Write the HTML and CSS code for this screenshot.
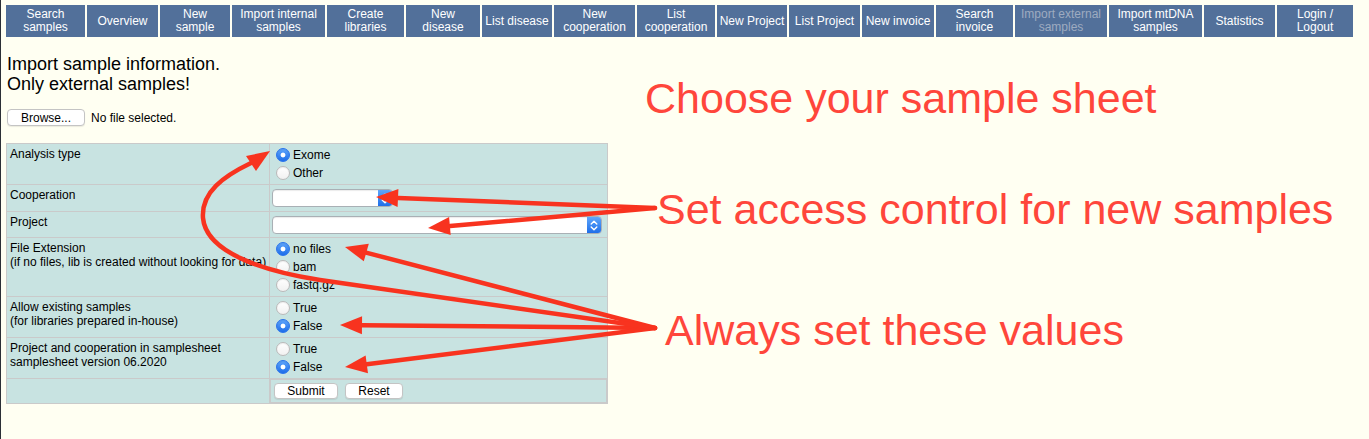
FILE: index.html
```html
<!DOCTYPE html>
<html lang="en">
<head>
<meta charset="utf-8">
<title>Import external samples</title>
<link rel="stylesheet" href="styles.css">
</head>
<body>
<nav class="topnav">
  <a class="nav-item">Search<br>samples</a>
  <a class="nav-item">Overview</a>
  <a class="nav-item">New<br>sample</a>
  <a class="nav-item">Import internal<br>samples</a>
  <a class="nav-item">Create<br>libraries</a>
  <a class="nav-item">New<br>disease</a>
  <a class="nav-item">List disease</a>
  <a class="nav-item">New<br>cooperation</a>
  <a class="nav-item">List<br>cooperation</a>
  <a class="nav-item">New Project</a>
  <a class="nav-item">List Project</a>
  <a class="nav-item">New invoice</a>
  <a class="nav-item">Search<br>invoice</a>
  <a class="nav-item disabled">Import external<br>samples</a>
  <a class="nav-item">Import mtDNA<br>samples</a>
  <a class="nav-item">Statistics</a>
  <a class="nav-item">Login /<br>Logout</a>
</nav>

<main class="content">
  <p class="intro">Import sample information.<br>Only external samples!</p>
  <div class="file-row">
    <span class="btn browse-btn">Browse...</span>
    <span class="file-name">No file selected.</span>
  </div>

  <form class="import-form">
    <table class="form-table">
      <colgroup><col class="col-label"><col class="col-value"></colgroup>
      <tr>
        <td class="lbl">Analysis type</td>
        <td class="val">
          <label class="opt"><input class="radio" type="radio" name="atype" checked>Exome</label>
          <label class="opt"><input class="radio" type="radio" name="atype">Other</label>
        </td>
      </tr>
      <tr>
        <td class="lbl">Cooperation</td>
        <td class="val val-select val-select-tall">
          <span class="select select-short"><span class="select-arrow"><svg width="14" height="17" viewBox="0 0 14 17"><path d="M4.2 7 L7 4.2 L9.8 7 M4.2 10 L7 12.8 L9.8 10" fill="none" stroke="#fff" stroke-width="1.4" stroke-linecap="round" stroke-linejoin="round"/></svg></span></span>
        </td>
      </tr>
      <tr>
        <td class="lbl">Project</td>
        <td class="val val-select">
          <span class="select select-long"><span class="select-arrow"><svg width="14" height="17" viewBox="0 0 14 17"><path d="M4.2 7 L7 4.2 L9.8 7 M4.2 10 L7 12.8 L9.8 10" fill="none" stroke="#fff" stroke-width="1.4" stroke-linecap="round" stroke-linejoin="round"/></svg></span></span>
        </td>
      </tr>
      <tr>
        <td class="lbl">File Extension<br>(if no files, lib is created without looking for data)</td>
        <td class="val">
          <label class="opt"><input class="radio" type="radio" name="ext" checked>no files</label>
          <label class="opt"><input class="radio" type="radio" name="ext">bam</label>
          <label class="opt"><input class="radio" type="radio" name="ext">fastq.gz</label>
        </td>
      </tr>
      <tr>
        <td class="lbl">Allow existing samples<br>(for libraries prepared in-house)</td>
        <td class="val">
          <label class="opt"><input class="radio" type="radio" name="allow">True</label>
          <label class="opt"><input class="radio" type="radio" name="allow" checked>False</label>
        </td>
      </tr>
      <tr>
        <td class="lbl">Project and cooperation in samplesheet<br>samplesheet version 06.2020</td>
        <td class="val">
          <label class="opt"><input class="radio" type="radio" name="pc">True</label>
          <label class="opt"><input class="radio" type="radio" name="pc" checked>False</label>
        </td>
      </tr>
      <tr>
        <td class="lbl"></td>
        <td class="val val-buttons">
          <span class="btn submit-btn">Submit</span>
          <span class="btn reset-btn">Reset</span>
        </td>
      </tr>
    </table>
  </form>
</main>

<div class="note note-choose">Choose your sample sheet</div>
<div class="note note-access">Set access control for new samples</div>
<div class="note note-always">Always set these values</div>

<svg class="arrows" width="1369" height="439" viewBox="0 0 1369 439">
  <g fill="none" stroke="#f8331f" stroke-width="4.5" stroke-linecap="round">
    <line x1="655" y1="208" x2="398" y2="198"/>
    <line x1="655" y1="208" x2="450" y2="226"/>
    <line x1="655" y1="328" x2="366" y2="252.6"/>
    <line x1="655" y1="328" x2="362" y2="325.2"/>
    <line x1="655" y1="328" x2="366.8" y2="364.3"/>
    <path d="M655 328 L320 280 C262 271 206 252 203 218 C201 192 224 176 251 163"/>
  </g>
  <g fill="#f8331f">
    <polygon points="376,197 398.4,188.9 397.6,206.9"/>
    <polygon points="428,228 449.1,217.1 450.7,235.0"/>
    <polygon points="345,247 368.8,243.8 363.8,261.3"/>
    <polygon points="340,325 362.1,316.2 361.9,334.2"/>
    <polygon points="345,367 365.6,355.4 368,373.2"/>
    <polygon points="270,151 246,156 256,171"/>
  </g>
</svg>
</body>
</html>
```

FILE: styles.css
```css
html, body {
  margin: 0;
  padding: 0;
}

body {
  background: #fffff2;
  min-height: 439px;
  font-family: "Liberation Sans", Arial, sans-serif;
  color: #000;
  position: relative;
  box-shadow: inset 1px 0 0 #2b2f36;
}

/* ---------- top navigation ---------- */
.topnav {
  display: flex;
  gap: 2px;
  padding: 5px 0 0 6px;
}

.nav-item {
  height: 32px;
  background: #52709a;
  color: #fff;
  font-size: 12px;
  line-height: 13px;
  text-align: center;
  display: flex;
  align-items: center;
  justify-content: center;
  text-decoration: none;
  flex: none;
}

.nav-item.disabled { color: #9eabc0; }

.nav-item:nth-child(1)  { width: 79px; }
.nav-item:nth-child(2)  { width: 71px; }
.nav-item:nth-child(3)  { width: 70px; }
.nav-item:nth-child(4)  { width: 93px; }
.nav-item:nth-child(5)  { width: 77px; }
.nav-item:nth-child(6)  { width: 74px; }
.nav-item:nth-child(7)  { width: 70px; }
.nav-item:nth-child(8)  { width: 81px; }
.nav-item:nth-child(9)  { width: 78px; }
.nav-item:nth-child(10) { width: 70px; }
.nav-item:nth-child(11) { width: 71px; }
.nav-item:nth-child(12) { width: 72px; }
.nav-item:nth-child(13) { width: 77px; }
.nav-item:nth-child(14) { width: 92px; }
.nav-item:nth-child(15) { width: 93px; }
.nav-item:nth-child(16) { width: 71px; }
.nav-item:nth-child(17) { width: 76px; }

/* ---------- content ---------- */
.content {
  padding-left: 6px;
}

.intro {
  margin: 17px 0 0 1px;
  font-size: 18px;
  line-height: 20px;
}

.file-row {
  display: flex;
  align-items: center;
  gap: 6px;
  margin: 15px 0 0 1px;
  font-size: 12px;
}

.btn {
  display: inline-flex;
  align-items: center;
  justify-content: center;
  box-sizing: border-box;
  background: #fff;
  border: 1px solid #c4c4c4;
  border-radius: 4px;
  font-size: 12px;
  color: #000;
  box-shadow: 0 1px 1px rgba(0, 0, 0, 0.08);
}

.browse-btn {
  width: 78px;
  height: 17px;
}

.import-form {
  margin: 17px 0 0 0;
}

.form-table {
  border-collapse: collapse;
  table-layout: fixed;
  width: 601px;
  background: #c8e3e1;
  border: 1px solid #cacaca;
  font-size: 12px;
}

.col-label { width: 263px; }
.col-value { width: 338px; }

.form-table td {
  border: 1px solid #cacaca;
  vertical-align: top;
  padding: 0;
}

.lbl {
  padding: 3px 0 3px 3px !important;
  line-height: 14px;
  white-space: nowrap;
}

.val {
  padding: 2px 2px 2px 2px !important;
}

.opt {
  display: flex;
  align-items: center;
  height: 18px;
  line-height: 18px;
}

.radio {
  appearance: none;
  -webkit-appearance: none;
  flex: none;
  width: 14px;
  height: 14px;
  margin: 0 3px 0 4px;
  border-radius: 50%;
  box-sizing: border-box;
  border: 1px solid #b9b9b9;
  background: linear-gradient(#ffffff, #f1f1f1);
  box-shadow: inset 0 1px 1px rgba(0, 0, 0, 0.06);
}

.radio:checked {
  border-color: #2c76ec;
  background:
    radial-gradient(circle, #ffffff 0 2px, rgba(255, 255, 255, 0) 2.8px),
    linear-gradient(#5ea5fb, #1d6de9);
}

.val-select {
  padding: 4px 2px 3px 2px !important;
}

.val-select-tall {
  padding-bottom: 4px !important;
}

.select {
  display: flex;
  justify-content: flex-end;
  box-sizing: border-box;
  height: 18px;
  background: #fff;
  border: 1px solid #a9b0b5;
  border-radius: 4px;
  box-shadow: inset 0 1px 1px rgba(0, 0, 0, 0.08);
  overflow: hidden;
}

.select-short { width: 121px; }
.select-long { width: 330px; }

.select-arrow {
  width: 14px;
  height: 100%;
  display: flex;
  align-items: center;
  justify-content: center;
  background: linear-gradient(#5fa6fb, #1f6fe9);
}

.val-buttons {
  padding: 3px 2px 3px 3px !important;
  display: flex;
  gap: 7px;
}

.submit-btn { width: 64px; height: 16px; }
.reset-btn { width: 58px; height: 16px; }

/* ---------- annotations overlay ---------- */
.note {
  position: absolute;
  font-family: "Liberation Sans", Arial, sans-serif;
  font-size: 43px;
  line-height: 43px;
  color: #ff463b;
  white-space: nowrap;
}

.note-choose { left: 645px; top: 77px; }
.note-access { left: 657px; top: 188px; }
.note-always { left: 665px; top: 309px; }

.arrows {
  position: absolute;
  left: 0;
  top: 0;
  pointer-events: none;
}
```
